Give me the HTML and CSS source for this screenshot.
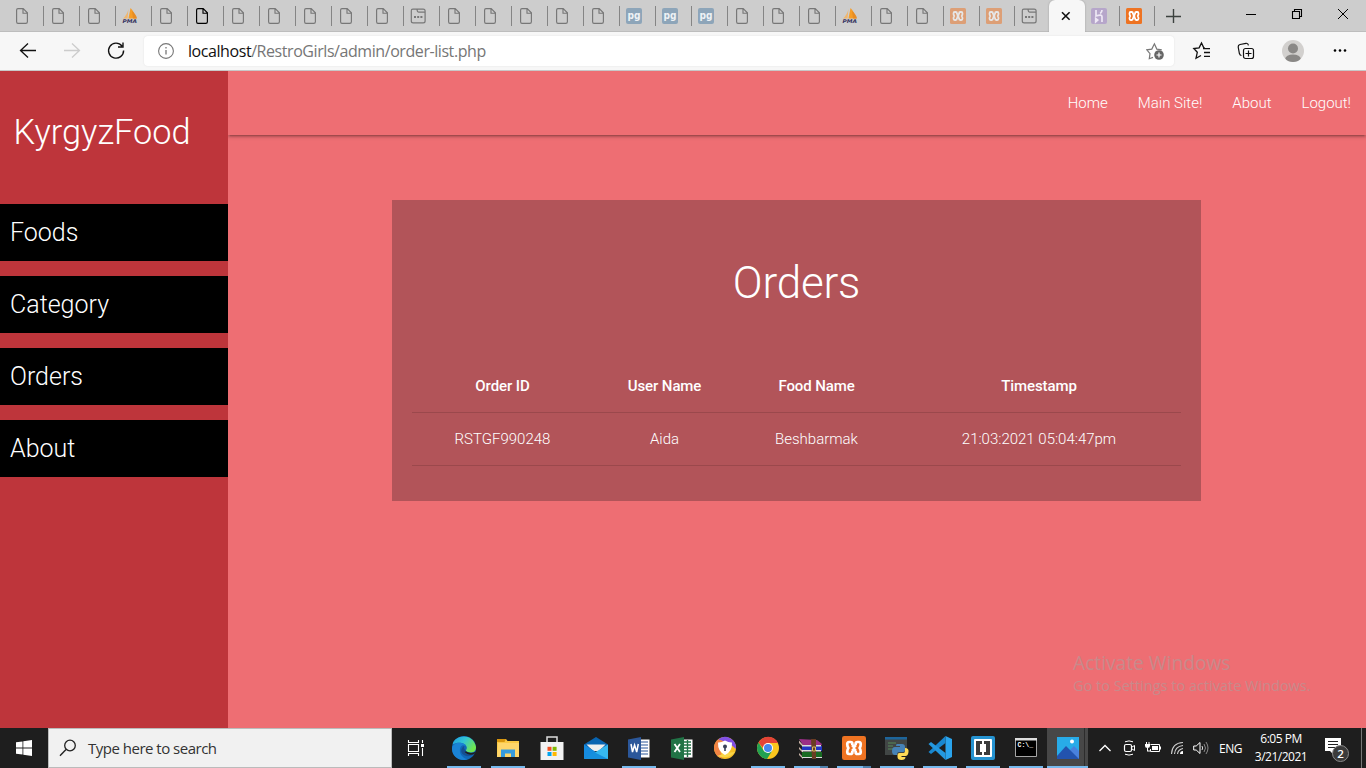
FILE: index.html
```html
<!DOCTYPE html>
<html lang="en">
<head>
<meta charset="utf-8">
<title>KyrgyzFood</title>
<link rel="stylesheet" href="styles.css">
</head>
<body>
<svg class="defs" aria-hidden="true">
  <symbol id="page" viewBox="0 0 16 16"><path d="M4 .6h5.2l4.2 4.2v9q0 1.6-1.6 1.6H4q-1.4 0-1.4-1.6V2Q2.6.6 4 .6zM9 .8v4.4h4.3" fill="none" stroke="currentColor" stroke-width="1.15"/></symbol>
  <symbol id="note" viewBox="0 0 16 16"><path d="M2.8 1.2h10.4q1.9 0 1.9 1.9v9.8q0 1.9-1.9 1.9H3.2q-1.9 0-1.9-1.9V2.7q0-1.500 1.500-1.500zM7 1.500q.4 2.700 1.800 2.700H15" fill="none" stroke="currentColor" stroke-width="1.200"/><path d="M4 8h2v2H4zM7.200 8h2v2h-2zM10.400 8h2v2h-2z" fill="currentColor"/></symbol>
  <symbol id="pma" viewBox="0 0 16 16"><path d="M6.500 1L5.500 10.500H1Q5 7 6.500 1z" fill="#efb66e"/><path d="M8.500 0q4 4 4 8l2 2.500H6.500z" fill="#f69d27"/><path d="M10 3q4 3 5 7.500h-4z" fill="#e78c24"/><text x=".5" y="15" font-family="DejaVu Sans" font-size="5" font-weight="700" font-style="italic" textLength="14.500" lengthAdjust="spacingAndGlyphs" fill="#343360">PMA</text></symbol>
  <symbol id="pg" viewBox="0 0 16 16"><rect width="16" height="16" rx="2" fill="#8da5b9"/><text x="1.500" y="10.600" font-family="DejaVu Sans" font-size="10" font-weight="700" textLength="13" lengthAdjust="spacingAndGlyphs" fill="#eef2f5">pg</text></symbol>
  <symbol id="xampp" viewBox="0 0 16 16"><rect width="16" height="16" rx="1.500" fill="#ee7322"/><path d="M6.900 6V5.200Q6.900 4 5.700 4H4.700Q3.500 4 3.500 5.500 3.500 7 4.300 8 3.500 9 3.500 10.500 3.500 12 4.700 12h1Q6.900 12 6.900 10.800V10M9.100 6V5.200Q9.100 4 10.300 4h1q1.200 0 1.200 1.500 0 1.500-.8 2.500.8 1 .8 2.500 0 1.500-1.200 1.500h-1Q9.100 12 9.100 10.800V10M6.400 6.500h3.200M6.400 9.500h3.200" fill="none" stroke="#fff" stroke-width="1.800" stroke-linejoin="round"/><path d="M7 6.500h2v3H7z" fill="#fff"/></symbol>
  <symbol id="heroku" viewBox="0 0 16 16"><rect width="16" height="16" rx="2" fill="#b6a6ca"/><path d="M5 2v6q6-2 6 .7V14M11 2q0 2-1.800 3.500M4.700 10.500v3.300l2-1.700z" fill="none" stroke="#eee8f5" stroke-width="1.700"/></symbol>
</svg>

<header class="tabs">
  <div class="tab"><svg><use href="#page"/></svg></div>
  <div class="tab"><svg><use href="#page"/></svg></div>
  <div class="tab"><svg><use href="#page"/></svg></div>
  <div class="tab"><svg><use href="#pma"/></svg></div>
  <div class="tab"><svg><use href="#page"/></svg></div>
  <div class="tab dark"><svg><use href="#page"/></svg></div>
  <div class="tab"><svg><use href="#page"/></svg></div>
  <div class="tab"><svg><use href="#page"/></svg></div>
  <div class="tab"><svg><use href="#page"/></svg></div>
  <div class="tab"><svg><use href="#page"/></svg></div>
  <div class="tab"><svg><use href="#page"/></svg></div>
  <div class="tab"><svg><use href="#note"/></svg></div>
  <div class="tab"><svg><use href="#page"/></svg></div>
  <div class="tab"><svg><use href="#page"/></svg></div>
  <div class="tab"><svg><use href="#page"/></svg></div>
  <div class="tab"><svg><use href="#page"/></svg></div>
  <div class="tab"><svg><use href="#page"/></svg></div>
  <div class="tab"><svg><use href="#pg"/></svg></div>
  <div class="tab"><svg><use href="#pg"/></svg></div>
  <div class="tab"><svg><use href="#pg"/></svg></div>
  <div class="tab"><svg><use href="#page"/></svg></div>
  <div class="tab"><svg><use href="#page"/></svg></div>
  <div class="tab"><svg><use href="#page"/></svg></div>
  <div class="tab"><svg><use href="#pma"/></svg></div>
  <div class="tab"><svg><use href="#page"/></svg></div>
  <div class="tab"><svg><use href="#page"/></svg></div>
  <div class="tab faded"><svg><use href="#xampp"/></svg></div>
  <div class="tab faded narrow"><svg><use href="#xampp"/></svg></div>
  <div class="tab last"><svg><use href="#note"/></svg></div>
  <div class="tab active"><svg viewBox="0 0 16 16"><path d="M4 4.200l7.600 7.600M11.600 4.200L4 11.800" stroke="#111" stroke-width="1.600"/></svg></div>
  <div class="tab narrow"><svg><use href="#heroku"/></svg></div>
  <div class="tab narrow"><svg><use href="#xampp"/></svg></div>
  <svg class="new-tab" viewBox="0 0 16 16"><path d="M8.500 1v14M1 8.500h15" stroke="#3c423f" stroke-width="1.400"/></svg>
  <div class="window-buttons">
    <svg viewBox="0 0 12 12"><path d="M1 6.500h10" stroke="#000"/></svg>
    <svg viewBox="0 0 12 12"><path d="M1.500 3.500h7v7h-7zM3.500 3.500v-2h7v7h-2" fill="none" stroke="#000" stroke-width="1.100"/></svg>
    <svg viewBox="0 0 12 12"><path d="M1 1l10 10M11 1L1 11" stroke="#000"/></svg>
  </div>
</header>

<div class="toolbar">
  <svg class="tool" viewBox="0 0 20 20"><path d="M18 9.500H2.500M10 2.500l-7.500 7 7.500 7" fill="none" stroke="#111" stroke-width="1.300"/></svg>
  <svg class="tool" viewBox="0 0 20 20"><path d="M2 9.500h15.500M10 2.500l7.500 7-7.500 7" fill="none" stroke="#ccc" stroke-width="1.300"/></svg>
  <svg class="tool" viewBox="0 0 20 20"><path d="M16 5A7.500 7.500 0 1 0 17.600 9.500M17 1.500V6h-5" fill="none" stroke="#111" stroke-width="1.400"/></svg>
  <div class="address">
    <svg class="info" viewBox="0 0 18 18"><circle cx="9" cy="9" r="7.400" fill="none" stroke="#777" stroke-width="1.100"/><path d="M9 8v4.500M9 5v1.500" stroke="#777" stroke-width="1.300"/></svg>
    <span class="url"><b>localhost</b>/RestroGirls/admin/order-list.php</span>
    <svg class="star" viewBox="0 0 18 18"><path d="M7 15.400l-3.700 1.300.700-5.100L.8 7.800l5-.7L8.400 1.800l2.400 5.300 5 .7" fill="none" stroke="#777" stroke-width="1.200"/><circle cx="13" cy="13" r="4.800" fill="#666"/><path d="M13 10.500v5M10.500 13h5" stroke="#fff" stroke-width="1.200"/></svg>
  </div>
  <div class="tools-right">
    <svg viewBox="0 0 20 20"><path d="M9 14.500l-5 2.800 1.300-6L1.800 7.500l5.300-.6L9.500 2l2.300 4.900h1M11 7.700h7M12 11.500h6M12 15.400h6" fill="none" stroke="#111" stroke-width="1.300"/></svg>
    <svg viewBox="0 0 20 20"><rect x="7.500" y="7.500" width="10" height="10" rx="2" fill="none" stroke="#111" stroke-width="1.200"/><path d="M12.500 9.500v6M9.500 12.500h6M5.500 14.500Q4 14.500 3.400 12.500L2.200 6Q2 4 4 3.500l6-1.200q2-.3 2.500 2" fill="none" stroke="#111" stroke-width="1.200"/></svg>
    <svg class="avatar" viewBox="0 0 22 22"><defs><clipPath id="face"><circle cx="11" cy="11" r="11"/></clipPath></defs><g clip-path="url(#face)"><rect width="22" height="22" fill="#d2d0ce"/><circle cx="11" cy="8.500" r="5" fill="#8a8886"/><ellipse cx="11" cy="19" rx="7.800" ry="4.600" fill="#8a8886"/></g></svg>
    <svg viewBox="0 0 20 20"><circle cx="5" cy="9.500" r="1.300"/><circle cx="10" cy="9.500" r="1.300"/><circle cx="15" cy="9.500" r="1.300"/></svg>
  </div>
</div>

<div class="site">
  <aside class="sidebar">
    <h1 class="brand">KyrgyzFood</h1>
    <ul class="menu"><li>Foods</li><li>Category</li><li>Orders</li><li>About</li></ul>
  </aside>
  <main class="main">
    <nav class="nav"><a>Home</a><a>Main Site!</a><a>About</a><a>Logout!</a></nav>
    <section class="card">
      <h2 class="title">Orders</h2>
      <table class="orders">
        <thead><tr><th class="c1">Order ID</th><th class="c2">User Name</th><th class="c3">Food Name</th><th class="c4">Timestamp</th></tr></thead>
        <tbody><tr><td>RSTGF990248</td><td>Aida</td><td>Beshbarmak</td><td>21:03:2021 05:04:47pm</td></tr></tbody>
      </table>
    </section>
    <div class="watermark"><p class="wm-title">Activate Windows</p><p class="wm-text">Go to Settings to activate Windows.</p></div>
  </main>
</div>

<footer class="taskbar">
  <div class="start"><svg viewBox="0 0 16 16"><path d="M0 2.300L6.500 1.400v6.100H0zM7.300 1.300L16 0v7.500H7.300zM0 8.400h6.500v6.100L0 13.700zM7.300 8.400H16V16l-8.700-1.300z" fill="#fff"/></svg></div>
  <div class="search"><svg viewBox="0 0 18 18"><circle cx="11" cy="6.500" r="5.300" fill="none" stroke="#222" stroke-width="1.300"/><path d="M7 10.500L1 16.800" stroke="#222" stroke-width="1.400"/></svg><span>Type here to search</span></div>
  <div class="taskview"><svg viewBox="0 0 18 18"><path d="M1.500 1v2.500h10V1M1.500 5.500h10v7h-10zM1.500 17v-2.500h10V17M15.500 1v3M15.500 9v8" fill="none" stroke="#fff" stroke-width="1.100"/><path d="M14 5h3v3h-3z" fill="#fff"/></svg></div>
  <div class="app wide on"><svg viewBox="0 0 24 24"><defs><linearGradient id="eg" x2="1" y2=".5"><stop stop-color="#1b9de2"/><stop offset=".5" stop-color="#33c5d5"/><stop offset="1" stop-color="#70e64f"/></linearGradient></defs><circle cx="12" cy="12" r="12" fill="#1068b8"/><path d="M.6 8.500C2-1 21-4 24 11c.3 6-6 6.500-9.500 4.500-1.500-1 .5-1.600.3-4C14.200 6 5 5.500.6 8.500z" fill="url(#eg)"/><path d="M0 12C2 5 12 6 14 10 9 7.500 7.500 12 8 16c.7 4 4 6.500 8 7.300C7 26-.5 20 0 12z" fill="#1a83d6"/><path d="M14.500 15.500c3 2 7 1.500 8.800.3-1.500 4-8.600 6.500-13 2-2-2.500-1-6.500 2-7.800-1 2 .5 4 2.200 5.500z" fill="#154f91"/><path d="M14 15.600q4.500 2.800 9.600.2l-1.200 2.200q-6 2-9.800-2z" fill="#1e1e1e"/></svg></div>
  <div class="app wide on"><svg viewBox="0 0 24 24"><path d="M1 3h9l1.500 2H23v16H1z" fill="#fbc944"/><path d="M1 3h9l-1.500 3H1z" fill="#d9960e"/><path d="M2 7h21v14H1z" fill="#ffd66a"/><path d="M5 13.500h14V21h-4v-3.500H9V21H5z" fill="#369bdd"/></svg></div>
  <div class="app wide"><svg viewBox="0 0 24 24"><path d="M7 7V1h10v6" fill="none" stroke="#ddd" stroke-width="1.500"/><path d="M.5 6h23v18H.5z" fill="#f2f2f2"/><path d="M7.500 10.800h4v4h-4z" fill="#f25022"/><path d="M12.600 10.800h4v4h-4z" fill="#7fba00"/><path d="M7.500 16h4v4h-4z" fill="#00a4ef"/><path d="M12.600 16h4v4h-4z" fill="#ffb900"/></svg></div>
  <div class="app"><svg viewBox="0 0 24 24"><path d="M0 8.500L12 1l12 7.500V12H0z" fill="#0864b1"/><path d="M2.500 8.500h19L15 15H9z" fill="#eee"/><path d="M0 8.500l12 7.500-12 7z" fill="#168bdf"/><path d="M24 8.500V23H0z" fill="#36b8f0"/><path d="M0 23l10-7 14 7z" fill="#168fdd"/></svg></div>
  <div class="app on"><svg viewBox="0 0 24 24"><path d="M12 3.500h10.500v18H12z" fill="#fff"/><path d="M14 6h7M14 9h7M14 12h7M14 15h7M14 18h7" stroke="#2b579a" stroke-width="1.200"/><path d="M1 3.500L14 1v23L1 21.500z" fill="#2b579a"/><path d="M4 8l1.500 8L7.600 9l2.100 7L11.300 8" fill="none" stroke="#fff" stroke-width="1.500"/></svg></div>
  <div class="app"><svg viewBox="0 0 24 24"><path d="M12 3.500h10.500v18H12z" fill="#fff"/><path d="M14 6h7M14 9h7M14 12h7M14 15h7M14 18h7M17.500 4v17" stroke="#217346" stroke-width="1.400"/><path d="M1 3.500L14 1v23L1 21.500z" fill="#217346"/><path d="M4.500 8l5.500 8M10 8l-5.500 8" stroke="#fff" stroke-width="1.800"/></svg></div>
  <div class="app"><svg viewBox="0 0 24 24"><circle cx="12" cy="12" r="11" fill="#f7bf25"/><path d="M5 3.500A11 11 0 0 1 23 13L16 7z" fill="#8150e4"/><path d="M5 3.500A11 11 0 0 0 9 22.500L6 8l7-2z" fill="#f28444"/><path d="M4 20q12 4 18-4l-9 1z" fill="#f9d649"/><path d="M12 4.500q4 2.300 7 2 .5 9-7 12.500-7.500-3.500-7-12.500 3 .3 7-2z" fill="#fff"/><circle cx="12" cy="10.500" r="2" fill="#39415a"/><path d="M11.200 11h1.600v4h-1.600z" fill="#39415a"/></svg></div>
  <div class="app on"><svg viewBox="0 0 24 24"><circle cx="12" cy="12" r="11" fill="#fbc61d"/><path d="M2.500 6.500A11 11 0 0 1 22 7H12l-5 5z" fill="#e44336"/><path d="M2.500 6.500A11 11 0 0 0 11 23l5-8H8z" fill="#21a152"/><circle cx="12" cy="12" r="5" fill="#fff"/><circle cx="12" cy="12" r="4" fill="#4687ee"/></svg></div>
  <div class="app on multi"><svg viewBox="0 0 24 24"><path d="M0 3l18 1 5 4-1 2-18-1z" fill="#9b2f86"/><path d="M0 4.500L4 9v2L0 7zM0 11l4 4v2l-4-4zM0 17l4 4v2l-4-4z" fill="#c9b4a6"/><path d="M3 10h20v5H3z" fill="#2336c4"/><path d="M3 9h19v1.500H3zM3 14h19v1.500H3zM3 21h20v1H3z" fill="#ddd"/><path d="M3 16h20v5H3z" fill="#186b22"/><path d="M12 3h5v20h-4z" fill="#6a3d23"/><path d="M13.500 11h3v4h-3z" fill="none" stroke="#d7bd60"/></svg></div>
  <div class="app on multi"><svg viewBox="0 0 16 16"><use href="#xampp"/></svg></div>
  <div class="app on"><svg viewBox="0 0 24 24"><path d="M0 1h22v18H0z" fill="#414645"/><path d="M0 1h22v2.500H0z" fill="#1d659b"/><path d="M3 7h8M3 10h5M3 13h7" stroke="#507453" stroke-width="1.500"/><path d="M12 8h5q3 0 3 3v3q0 2-2 2h-4q-2 0-2 3h-2q-3 0-3-4t3-4h5v-1h-4q0-2 1-2z" fill="#4683b7"/><path d="M20 12q4 0 3.500 4t-3 4h-4v1h4q0 3-4 3t-4-3v-2q0-2 2-2h4q1.500 0 1.500-2z" fill="#ffdb55"/></svg></div>
  <div class="app on"><svg viewBox="0 0 24 24"><path d="M17.500 0L24 3v18l-6.500 3z" fill="#2aa4ed"/><path d="M17.500 0v7L3 18 .5 16z" fill="#1987cf"/><path d="M17.500 24v-7L3 6 .5 8z" fill="#2498df"/></svg></div>
  <div class="app on"><svg viewBox="0 0 24 24"><rect width="24" height="24" rx="2" fill="#2593d1"/><rect x="3" y="3" width="18" height="18" rx="1" fill="#fff"/><path d="M5 5h6v3H9v8h2v3H5zM19 5h-6v3h2v8h-2v3h6z" fill="#3b3b3b"/></svg></div>
  <div class="app on"><svg viewBox="0 0 24 24"><path d="M1.500 2.500h21v18h-21z" fill="#000" stroke="#a6a6a6"/><path d="M1 2h22v2.500H1z" fill="#ddd"/><text x="3.500" y="11" font-family="Liberation Mono" font-size="6.500" font-weight="700" fill="#fff">C:\_</text></svg></div>
  <div class="app photos on"><svg viewBox="0 0 24 24"><path d="M1 1h22v22H1z" fill="#28abe8"/><path d="M14 14l4-4 5 5v8H14z" fill="#4981dd"/><path d="M1 20L10 10l13 13H1z" fill="#2353ae"/><circle cx="16" cy="5.500" r="2" fill="#fff"/></svg></div>
  <div class="tray">
    <svg class="chev" viewBox="0 0 16 16"><path d="M2.500 11L8 5.500l5.500 5.500" fill="none" stroke="#fff" stroke-width="1.300"/></svg>
    <svg viewBox="0 0 16 16"><rect x="3.500" y="4.500" width="7" height="7" rx="1.500" fill="none" stroke="#fff" stroke-width="1.200"/><path d="M11 7l2.500-1.500v5L11 9M4 1.800Q8 0 12 1.800M4 14.200q4 1.800 8 0" fill="none" stroke="#fff"/></svg>
    <svg viewBox="0 0 16 16"><path d="M5.500 4.500h9v7h-9V9" fill="none" stroke="#fff"/><path d="M7 6h6v4H7zM15 6.500h1v3h-1zM0 4h5v2q0 2-2.500 2T0 6zM1 2h1v2H1zM3.500 2h1v2h-1zM2 8h1v2.500h2v1H2z" fill="#fff"/></svg>
    <svg viewBox="0 0 16 16"><g fill="none" stroke="#d0d0d0" stroke-width="1.100"><path d="M2.500 14Q3 3 14 2.500M5.500 14Q6 6.500 14 5.500M8.500 14Q9 9.500 14 8.500"/></g><path d="M11 14q0-3 3-3v3z" fill="#fff"/></svg>
    <svg viewBox="0 0 16 16"><path d="M.7 6h2.500L7 2.500v11L3.200 10H.7z" fill="none" stroke="#fff"/><path d="M9 6q1.300 2 0 4" fill="none" stroke="#ddd"/><path d="M11 4q3 4 0 8M13 2q4 6 0 12" fill="none" stroke="#888"/></svg>
    <span class="lang">ENG</span>
    <div class="clock"><span>6:05 PM</span><span>3/21/2021</span></div>
    <svg class="notice" viewBox="0 0 26 26"><path d="M0 1h16v13H8v3l-3-3H0z" fill="#fff"/><path d="M3 4.500h10M3 7.500h10M3 10.500h7" stroke="#222"/><circle cx="15.500" cy="16.500" r="8" fill="#3b3b3b" stroke="#8a8a8a"/><text x="15.500" y="20.500" text-anchor="middle" font-family="Open Sans" font-size="11.500" font-weight="600" fill="#fff">2</text></svg>
  </div>
</footer>
</body>
</html>
```

FILE: styles.css
```css
* { box-sizing: border-box; }
body {
  margin: 0;
  width: 1366px;
  height: 768px;
  overflow: hidden;
  display: flex;
  flex-direction: column;
  font-family: Roboto, sans-serif;
}
svg { display: block; flex: none; }
h1, h2, p, ul { margin: 0; padding: 0; font-weight: 300; }
.defs { position: absolute; width: 0; height: 0; }

/* browser tabs */
.tabs {
  display: flex;
  height: 32px;
  padding-left: 8px;
  background: #cdcdcd;
  border-bottom: 1px solid #bdbdbd;
}
.tab {
  flex: none;
  width: 36px;
  height: 32px;
  padding: 8px 0 0 6px;
  color: #777;
  background: linear-gradient(#858585, #858585) right 6px / 1px 20px no-repeat;
}
.tab svg { width: 16px; height: 16px; }
.tab.dark { color: #000; }
.tab.faded svg { opacity: .5; }
.tab.narrow { width: 35px; }
.tab.last { width: 34px; background: none; }
.tab.active {
  background: #f7f7f7;
  border-radius: 6px 6px 0 0;
  padding-left: 9px;
  box-shadow: 0 0 2px #999;
  clip-path: inset(0 -3px 0 -3px);
}
.new-tab { width: 16px; height: 16px; margin: 8px 0 0 10px; }
.window-buttons {
  margin-left: auto;
  display: flex;
  gap: 34px;
  padding: 8px 17px 0 0;
}
.window-buttons svg { width: 12px; height: 12px; }

/* address row */
.toolbar {
  display: flex;
  align-items: center;
  height: 39px;
  padding: 0 18px;
  background: #f7f7f7;
  border-bottom: 1px solid #c8c8c8;
}
.tool { width: 20px; height: 20px; margin-right: 24px; }
.address {
  display: flex;
  align-items: center;
  width: 1030px;
  flex: none;
  height: 30px;
  margin-left: -6px;
  padding: 0 10px 0 13px;
  border-radius: 4px;
  background: #fff;
  box-shadow: 0 0 2px #e0e0e0;
}
.info { width: 18px; height: 18px; }
.url {
  margin-left: 13px;
  font: 16px "Open Sans", sans-serif;
  letter-spacing: -.43px;
  color: #767676;
}
.url b { font-weight: 400; color: #111; }
.star { width: 18px; height: 18px; margin-left: auto; }
.tools-right { display: flex; align-items: center; gap: 24px; margin-left: 18px; }
.tools-right svg { width: 20px; height: 20px; }
.tools-right .avatar { width: 22px; height: 22px; margin: 0 2px; }

/* site */
.site { display: flex; height: 657px; }
.sidebar { width: 228px; background: #be353b; color: #fff; }
.brand { padding: 36px 0 0 13.500px; height: 133px; font-size: 34.300px; line-height: 50px; }
.menu { display: grid; gap: 15px; list-style: none; }
.menu li { height: 57px; padding-left: 10px; background: #000; font-size: 25px; line-height: 57px; }
.main { position: relative; flex: 1; background: #ee6e73; color: #fff; }
.nav {
  display: flex;
  justify-content: flex-end;
  gap: 30px;
  height: 64px;
  padding-right: 15px;
  font-size: 15px;
  font-weight: 300;
  line-height: 64px;
  box-shadow: 0 2px 2px rgba(0,0,0,.14), 0 3px 1px -2px rgba(0,0,0,.12), 0 1px 5px rgba(0,0,0,.2);
  clip-path: inset(0 0 -8px 0);
}
.card {
  width: 809px;
  height: 301px;
  margin: 65px 0 0 164px;
  padding: 48px 20px 0;
  background: #b25459;
}
.title { height: 111px; font-size: 44px; line-height: 70px; text-align: center; letter-spacing: -.2px; }
.orders { width: 769px; table-layout: fixed; border-collapse: collapse; font-size: 15px; font-weight: 300; }
.orders tr { height: 53px; border-bottom: 1px solid #9b484c; }
.orders th, .orders td { padding: 0; text-align: center; }
.orders th { padding-top: 1px; font-weight: 500; letter-spacing: -.1px; }
.c1 { width: 181px; }
.c2 { width: 143px; }
.c3 { width: 161px; }
.watermark { position: absolute; left: 845px; top: 578px; color: #c78a8b; font-family: "Open Sans", sans-serif; }
.wm-title { font-size: 19.200px; line-height: 27px; font-weight: 400; white-space: nowrap; }
.wm-text { font-size: 14.500px; line-height: 19px; font-weight: 400; white-space: nowrap; }

/* taskbar */
.taskbar { display: flex; height: 40px; background: #1e1e1e; color: #fff; font-family: "Open Sans", sans-serif; }
.start { width: 48px; padding: 12px 16px; }
.start svg { width: 16px; height: 16px; }
.search {
  display: flex;
  align-items: center;
  gap: 11px;
  width: 344px;
  padding-left: 10px;
  border: 1px solid #bbb;
  background: #f1f1f1;
  color: #333;
  font-size: 15px;
  letter-spacing: -.5px;
}
.search svg { width: 18px; height: 18px; }
.taskview { width: 50px; padding: 11px 15px; }
.taskview svg { width: 18px; height: 18px; }
.app {
  flex: none;
  display: grid;
  place-items: center;
  width: 43px;
  height: 40px;
}
.app svg { width: 24px; height: 24px; }
.app.wide { width: 44px; }
.app.on { background: linear-gradient(#76b9ed, #76b9ed) center bottom / 34px 2px no-repeat; }
.app.multi { background: linear-gradient(90deg, #76b9ed 26px, #4e80ab 26px) center bottom / 34px 2px no-repeat; }
.app.photos { width: 41px; background: linear-gradient(#76b9ed, #76b9ed) center bottom / 100% 2px no-repeat, linear-gradient(90deg, #474747 37px, #2c2c2c 37px, #2c2c2c 38px, #474747 38px); }
.tray { flex: 1; display: flex; align-items: center; padding-left: 9px; margin-right: 4px; border-right: 1px solid #777; }
.tray svg { width: 16px; height: 16px; margin-right: 8px; }
.lang { margin-left: 2px; width: 28px; font-size: 12px; letter-spacing: -.5px; }
.clock {
  display: flex;
  flex-direction: column;
  align-items: center;
  width: 68px;
  font-size: 12px;
  line-height: 18px;
  letter-spacing: -.5px;
}
.tray .notice { width: 26px; height: 26px; margin: 4px 0 0 10px; }
```
